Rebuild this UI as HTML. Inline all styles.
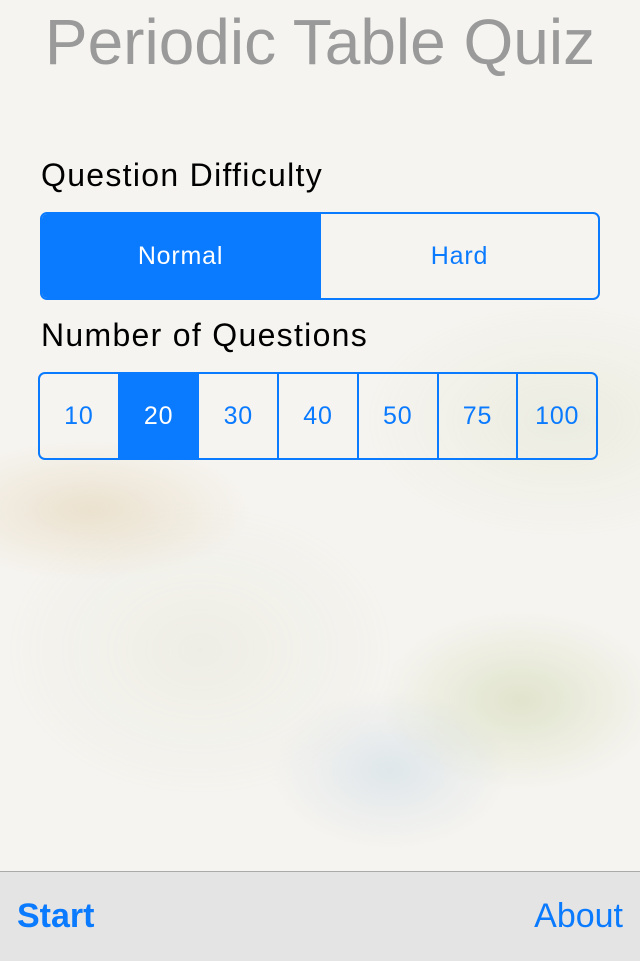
<!DOCTYPE html>
<html><head><meta charset="utf-8"><style>
body{margin:0;width:640px;height:960px;position:relative;overflow:hidden;font-family:"Liberation Sans",sans-serif;
background:
radial-gradient(ellipse 140px 90px at 520px 700px,rgba(150,170,80,.22),transparent),
radial-gradient(ellipse 120px 80px at 390px 770px,rgba(120,170,210,.18),transparent),
radial-gradient(ellipse 160px 70px at 90px 510px,rgba(190,150,70,.2),transparent),
radial-gradient(ellipse 200px 120px at 560px 420px,rgba(170,190,130,.14),transparent),
radial-gradient(ellipse 200px 150px at 200px 650px,rgba(180,190,150,.12),transparent),
#f6f4f0;}
.t{position:absolute;left:0;width:640px;text-align:center;top:5px;font-size:64px;color:#9a9a9a;white-space:nowrap;}
.l{position:absolute;left:41px;font-size:32px;letter-spacing:1.3px;color:#000;}
.seg{position:absolute;display:flex;border:2px solid #0a7aff;border-radius:7px;overflow:hidden;box-sizing:border-box;}
.seg div{flex:1;display:flex;align-items:center;justify-content:center;color:#0a7aff;font-size:25px;letter-spacing:0.8px;}
.seg div+div{border-left:2px solid #0a7aff;}
.seg .on{background:#0a7aff;color:#fff;}
.bar{position:absolute;left:0;top:871px;width:640px;height:89px;background:#e4e4e4;border-top:1px solid #aaa;}
.bar span{position:absolute;top:25px;font-size:34px;color:#0a7aff;}
</style></head><body>
<div class="t">Periodic Table Quiz</div>
<div class="l" style="top:157px">Question Difficulty</div>
<div class="seg" style="left:40px;top:212px;width:560px;height:88px"><div class="on">Normal</div><div>Hard</div></div>
<div class="l" style="top:317px">Number of Questions</div>
<div class="seg" style="left:38px;top:372px;width:560px;height:88px"><div>10</div><div class="on">20</div><div>30</div><div>40</div><div>50</div><div>75</div><div>100</div></div>
<div class="bar"><span style="left:17px;font-weight:bold">Start</span><span style="right:17px">About</span></div>
</body></html>
